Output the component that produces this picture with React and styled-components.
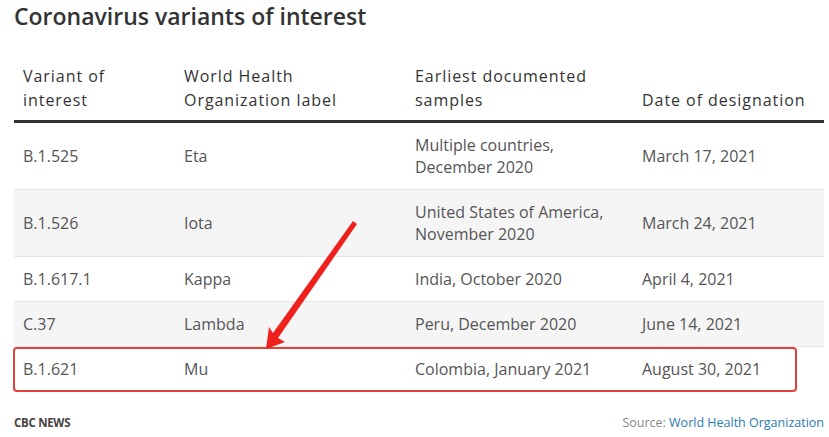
import React from "react";
import styled, { createGlobalStyle } from "styled-components";

const GlobalStyle = createGlobalStyle`
  html, body {
    margin: 0;
    padding: 0;
    background: #fff;
  }
  body {
    font-family: "Open Sans", "Noto Sans", sans-serif;
    color: #333;
  }
`;

const rows = [
  { variant: "B.1.525", label: "Eta", samples: ["Multiple countries,", "December 2020"], date: "March 17, 2021" },
  { variant: "B.1.526", label: "Iota", samples: ["United States of America,", "November 2020"], date: "March 24, 2021" },
  { variant: "B.1.617.1", label: "Kappa", samples: ["India, October 2020"], date: "April 4, 2021" },
  { variant: "C.37", label: "Lambda", samples: ["Peru, December 2020"], date: "June 14, 2021" },
  { variant: "B.1.621", label: "Mu", samples: ["Colombia, January 2021"], date: "August 30, 2021", marked: true },
];

export default function App() {
  return (
    <Page>
      <GlobalStyle />
      <Title>Coronavirus variants of interest</Title>
      <Table>
        <HeadRow>
          <HeadCell>Variant of<br />interest</HeadCell>
          <HeadCell>World Health<br />Organization label</HeadCell>
          <HeadCell>Earliest documented<br />samples</HeadCell>
          <HeadCell>Date of designation</HeadCell>
        </HeadRow>
        {rows.map((row, i) => (
          <Row key={row.variant} $striped={i % 2 === 1} $marked={row.marked}>
            <Cell>{row.variant}</Cell>
            <Cell>{row.label}</Cell>
            <Cell>
              {row.samples.map((line) => (
                <div key={line}>{line}</div>
              ))}
            </Cell>
            <Cell>{row.date}</Cell>
          </Row>
        ))}
      </Table>
      <Footer>
        <Brand>CBC NEWS</Brand>
        <Source>
          Source: <SourceLink>World Health Organization</SourceLink>
        </Source>
      </Footer>
      <Arrow viewBox="0 0 829 437" aria-hidden="true">
        <polygon
          points="266,349 285,342 278,338 357,224 353,221 273,333 269,327"
          fill="#f0201c"
        />
      </Arrow>
    </Page>
  );
}

const Page = styled.div`
  position: relative;
  width: 829px;
  height: 437px;
  padding: 0 5px 0 14px;
  box-sizing: border-box;
`;

const Title = styled.h1`
  margin: 0;
  font-size: 23px;
  font-weight: 600;
  line-height: 32px;
  color: #333;
`;

const Table = styled.div`
  margin-top: 32px;
  width: 810px;
  display: grid;
  grid-template-columns: 161px 231px 227px 191px;
`;

const HeadRow = styled.div`
  display: contents;
`;

const HeadCell = styled.div`
  display: flex;
  align-items: flex-end;
  padding: 0 9px 8px;
  font-size: 16px;
  letter-spacing: 0.95px;
  line-height: 24px;
  color: #333;
  border-bottom: 3px solid #333;
`;

const Row = styled.div`
  grid-column: 1 / -1;
  display: grid;
  grid-template-columns: subgrid;
  position: relative;
  background: ${(p) => (p.$striped ? "#f5f5f5" : "#fff")};
  border-bottom: ${(p) => (p.$marked ? "none" : "1px solid #e6e6e6")};

  ${(p) =>
    p.$marked &&
    `
    &::after {
      content: "";
      position: absolute;
      left: -1px;
      right: 27px;
      top: 0;
      bottom: -1px;
      border: 2px solid #e2403b;
      border-radius: 4px;
      pointer-events: none;
    }
  `}
`;

const Cell = styled.div`
  display: flex;
  flex-direction: column;
  justify-content: center;
  padding: 11px 9px;
  font-size: 16px;
  line-height: 22px;
  color: #555;
`;

const Footer = styled.div`
  margin-top: 23px;
  width: 810px;
  display: flex;
  justify-content: space-between;
  align-items: center;
  line-height: 18px;
`;

const Brand = styled.span`
  font-size: 11.5px;
  font-weight: 700;
  color: #444;
  letter-spacing: -0.3px;
`;

const Source = styled.span`
  font-size: 12.5px;
  color: #888;
`;

const SourceLink = styled.span`
  color: #2b7bb3;
`;

const Arrow = styled.svg`
  position: absolute;
  left: 0;
  top: 0;
  width: 829px;
  height: 437px;
  pointer-events: none;
`;
